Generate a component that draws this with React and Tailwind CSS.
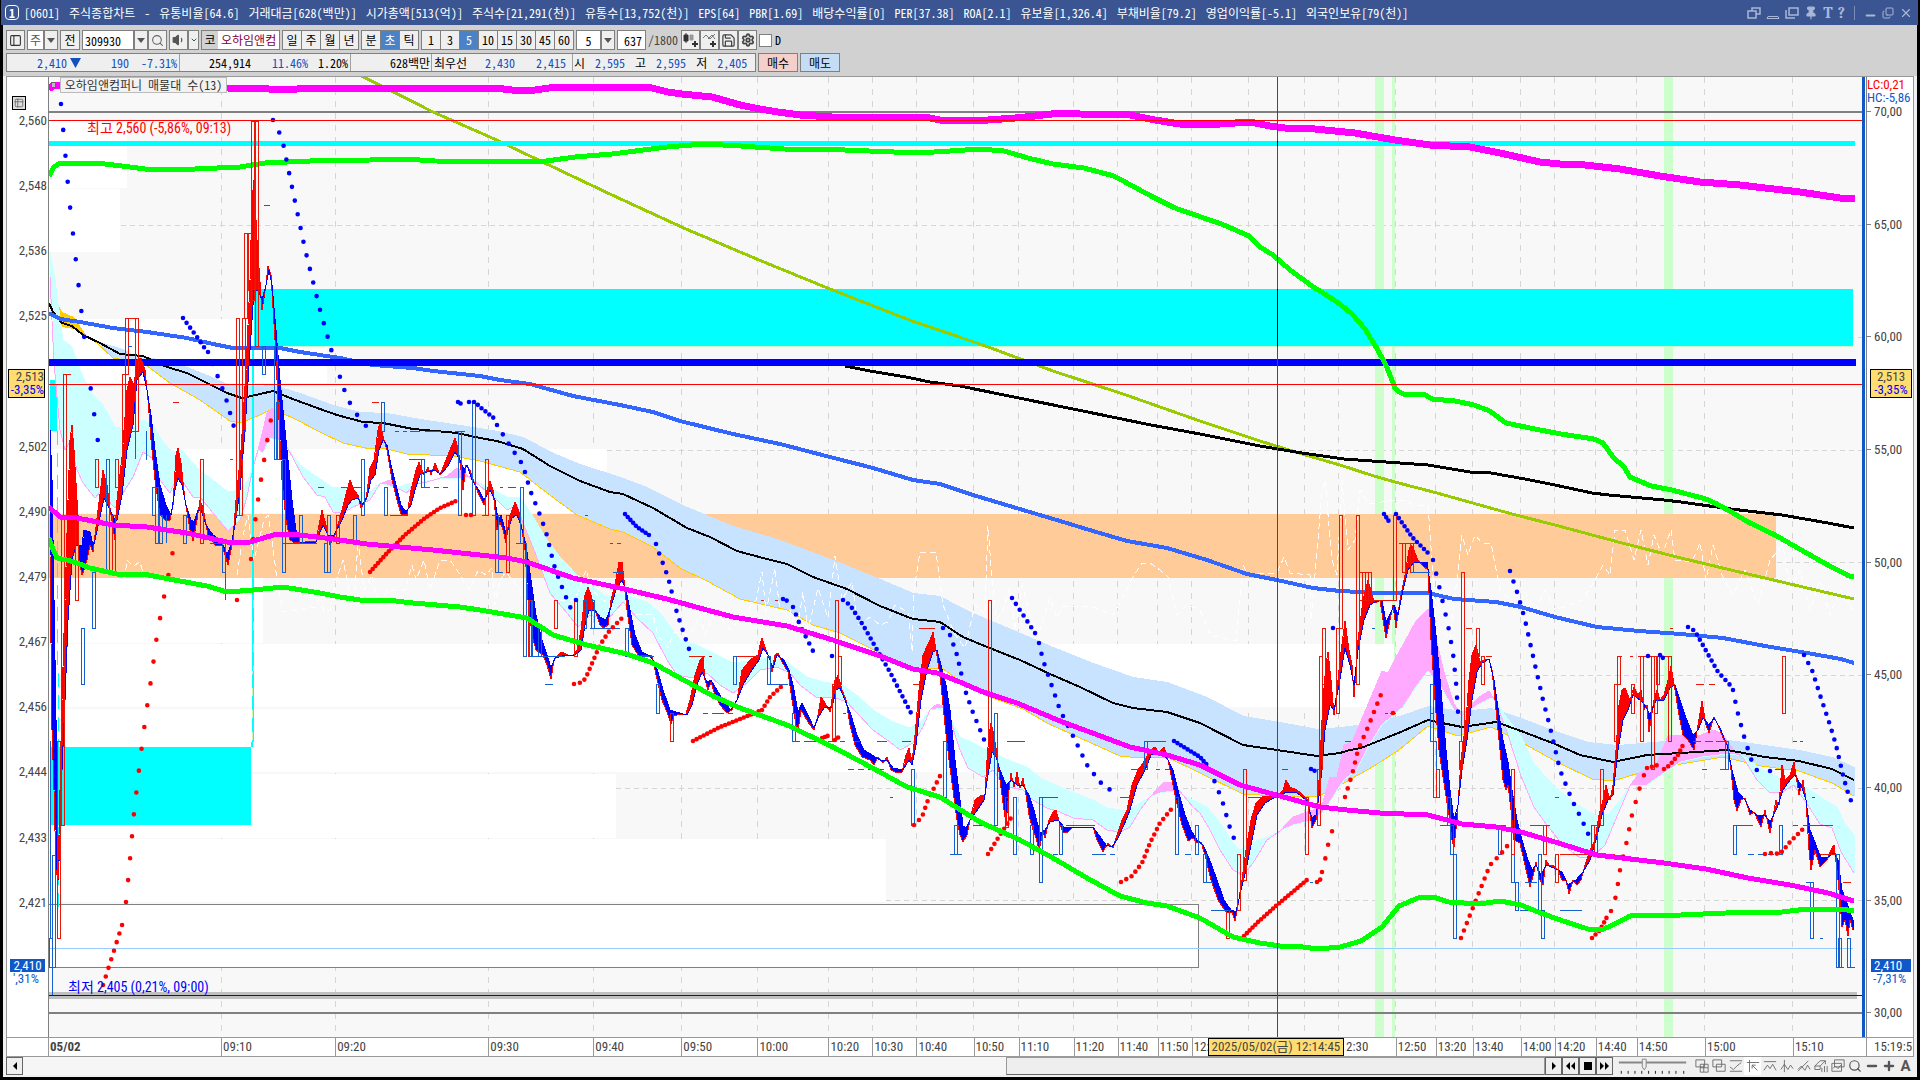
import {
  ChevronDown, Search, Volume1, Save, Settings, Pin, Minus, Plus, X, Copy, PanelLeft, Table2,
} from 'lucide-react'

// plot coordinates: x 49..1862, y 77..1037
const VIEW = '49 77 1813 960'

const line = (s) => s.trim().split(/\s+/).map((p) => p.split(',').map(Number))

const topMagenta = '49,89 54,85 60,86 75,88 227,88 269,89 282,90 312,88 495,88 520,91 535,90 556,87 640,87 648,87 668,92 682,94 712,97 740,105 760,109 778,112 800,115 832,117 870,117 925,117 940,120 975,121 1015,118 1035,116 1060,113 1080,114 1130,115 1155,120 1180,124 1200,125 1220,124 1250,122 1270,126 1285,128 1315,129 1355,133 1395,140 1430,145 1470,147 1500,153 1540,162 1560,164 1585,165 1620,169 1660,176 1700,182 1740,185 1765,188 1800,192 1840,198 1855,198'
const topGreen = '49,176 54,167 60,163 95,163 105,164 130,167 145,169 195,169 240,167 265,163 310,161 370,160 405,159 435,161 539,162 575,157 612,154 667,147 704,144 741,146 784,149 845,150 918,153 950,151 980,149 1004,151 1028,158 1053,164 1084,168 1114,176 1151,196 1175,208 1224,225 1249,236 1260,247 1273,255 1290,270 1312,286 1320,291 1340,304 1352,314 1365,329 1376,347 1386,365 1395,388 1398,391 1405,395 1424,394 1432,399 1455,401 1474,405 1490,411 1506,423 1535,429 1561,434 1594,439 1603,443 1613,457 1624,467 1630,477 1651,486 1672,490 1706,499 1717,504 1733,513 1748,522 1775,535 1803,551 1826,564 1849,576 1854,577'
const olive = '361,76 380,85 433,112 490,137 612,195 686,229 759,260 830,289 912,321 980,344 1053,371 1126,395 1200,421 1260,441 1302,454 1340,465 1374,476 1395,482 1437,493 1512,514 1555,525 1622,543 1681,558 1731,570 1786,583 1854,599'
const blackLong = '845,366 870,371 906,377 930,382 960,386 1004,395 1078,410 1151,425 1200,434 1260,446 1302,453 1344,459 1428,465 1470,472 1491,473 1525,479 1555,485 1592,493 1609,495 1664,500 1681,502 1731,509 1782,515 1828,523 1854,528'
const blueLong = '49,313 60,319 80,322 113,328 147,332 187,338 213,344 233,348 280,348 300,352 340,358 373,365 413,368 433,371 480,376 500,380 530,384 573,396 620,405 653,412 680,421 733,434 780,444 830,457 873,468 913,480 940,484 973,495 1013,507 1060,521 1093,531 1127,541 1167,548 1207,560 1247,574 1277,580 1313,588 1340,591 1380,593 1428,593 1454,599 1496,602 1521,607 1555,617 1597,627 1639,631 1681,634 1723,638 1765,646 1807,653 1841,659 1854,663'
const midMagenta = '49,507 60,517 77,518 113,525 147,527 187,533 227,542 250,542 277,534 300,535 333,539 367,544 433,550 480,555 507,558 527,562 573,578 620,588 667,599 707,610 733,617 787,626 833,640 880,656 913,669 937,673 960,682 983,692 1017,703 1060,721 1087,731 1130,747 1167,755 1200,765 1240,785 1280,796 1320,807 1347,810 1380,813 1428,815 1462,824 1496,827 1521,832 1555,842 1597,855 1664,863 1706,869 1748,878 1790,885 1828,893 1854,901'
const lowGreen = '49,538 52,547 57,558 67,560 77,563 90,568 117,574 143,574 180,581 207,586 227,592 253,590 283,587 320,593 340,597 360,600 387,600 413,603 460,607 480,610 527,618 553,635 587,645 627,654 653,663 680,678 713,696 740,708 787,725 833,747 867,765 907,787 940,797 980,822 1020,840 1053,858 1087,878 1120,896 1147,903 1167,906 1200,918 1233,937 1260,943 1280,946 1303,947 1318,949 1340,947 1361,941 1382,927 1399,906 1418,898 1433,897 1449,902 1479,904 1500,901 1521,905 1538,912 1563,921 1588,929 1601,930 1611,926 1630,916 1681,915 1748,912 1782,912 1807,909 1841,909 1854,911'

const cloudTop = '62,323 83,334 100,342 125,350 133,355 153,358 187,367 207,375 227,384 253,386 273,385 300,393 333,405 360,412 387,413 420,419 480,428 497,431 523,437 553,453 580,464 620,477 647,487 687,507 733,526 780,540 833,560 880,579 913,593 940,596 960,607 973,613 1013,630 1053,647 1093,663 1133,677 1167,682 1207,697 1243,716 1280,722 1317,729 1340,727 1365,724 1399,716 1428,706 1462,711 1491,708 1521,718 1555,731 1588,742 1618,745 1664,741 1714,738 1757,744 1799,750 1832,757 1854,767'
const cloudMid = '49,303 53,312 62,323 72,326 83,335 100,343 120,354 143,356 167,367 187,373 207,383 227,393 242,398 260,394 273,391 290,398 320,409 337,415 363,422 383,423 413,429 457,433 480,438 497,441 523,449 550,466 580,481 610,492 623,494 653,508 687,528 710,537 737,551 763,558 787,564 813,577 847,589 880,606 913,619 940,622 963,637 987,647 1020,660 1050,674 1080,687 1113,703 1133,708 1167,712 1200,723 1243,745 1277,750 1317,756 1340,753 1350,750 1361,748 1386,738 1403,731 1428,720 1437,722 1462,727 1496,722 1521,731 1555,744 1580,755 1613,762 1647,755 1681,753 1727,750 1765,757 1799,761 1832,769 1854,780'
const cloudLow = '62,312 66,317 74,320 83,334 97,343 113,358 143,363 170,383 200,400 230,421 240,423 253,418 273,409 293,418 320,432 343,443 370,449 383,448 407,454 453,456 480,461 520,472 547,493 577,515 610,529 623,532 653,547 680,568 707,581 740,599 787,610 813,625 840,633 880,653 913,669 930,668 943,669 973,690 990,697 1023,709 1047,723 1080,738 1120,756 1140,758 1167,757 1200,773 1243,794 1277,796 1319,796 1344,783 1374,766 1399,750 1428,726 1458,736 1491,727 1521,742 1555,761 1592,779 1613,781 1639,773 1681,764 1723,757 1761,766 1799,771 1832,783 1854,796'

const swiftTop = '50,252 55,280 58,303 63,340 72,347 80,370 90,392 103,405 115,427 130,430 143,420 153,425 163,442 173,452 182,450 197,468 213,480 228,492 240,490 248,480 258,450 263,453 270,438 283,442 287,447 300,465 317,477 333,488 350,487 360,492 370,492 380,483 397,488 407,484 420,482 447,478 457,479 467,477 480,483 490,488 507,497 520,497 530,512 547,540 560,557 577,575 593,587 607,597 620,593 647,602 660,613 680,640 697,645 713,653 733,663 757,660 770,657 787,662 807,677 823,682 843,685 860,698 873,710 893,722 910,728 920,723 930,710 943,708 948,713 960,737 973,743 993,753 1013,762 1027,767 1040,778 1060,787 1080,795 1093,800 1107,808 1127,811 1140,803 1150,797 1160,793 1173,791 1183,795 1193,800 1207,807 1220,823 1233,843 1240,850 1250,843 1267,837 1280,831 1293,825 1313,820 1323,812 1344,780 1357,769 1369,745 1382,725 1403,707 1416,687 1428,671 1441,687 1454,710 1462,716 1479,704 1491,698 1496,700 1504,714 1521,736 1534,764 1555,787 1576,804 1597,816 1609,814 1622,798 1630,786 1647,785 1664,773 1681,762 1702,757 1727,754 1744,756 1757,766 1769,773 1782,780 1794,780 1807,788 1828,802 1837,807 1845,824 1854,835'
const swiftLow = '50,277 54,363 60,430 65,450 70,442 77,470 83,483 95,498 100,492 115,508 123,493 133,477 143,452 152,458 160,480 170,493 177,477 183,482 193,497 200,497 213,513 228,531 240,520 247,497 253,468 258,450 263,430 267,413 272,408 282,417 287,447 293,458 303,477 317,495 325,497 333,512 343,513 353,507 370,500 380,484 390,480 397,488 407,493 413,485 427,482 447,476 457,468 467,475 480,486 497,500 507,510 517,505 523,523 533,547 550,593 567,613 578,627 590,615 607,620 623,602 637,618 653,633 667,660 677,675 693,678 707,673 720,685 733,693 747,683 760,670 777,667 790,673 800,685 817,698 833,697 847,702 857,713 873,730 890,742 900,750 913,743 923,727 930,710 937,704 942,706 948,713 960,750 968,768 983,777 993,770 1000,780 1010,787 1023,790 1033,800 1047,808 1060,812 1073,818 1093,820 1107,830 1120,832 1130,827 1140,810 1150,797 1163,783 1172,782 1183,795 1193,807 1200,813 1210,830 1220,850 1233,870 1243,875 1253,863 1267,840 1280,831 1293,817 1313,810 1323,802 1330,777 1337,777 1344,745 1352,742 1361,721 1382,671 1388,673 1395,659 1403,645 1416,621 1428,609 1435,635 1445,676 1454,704 1462,716 1470,707 1479,697 1489,691 1496,702 1508,735 1521,776 1534,807 1546,824 1563,845 1580,858 1592,857 1605,845 1618,814 1630,786 1639,773 1656,766 1668,736 1685,735 1698,736 1714,730 1723,735 1733,749 1744,759 1757,780 1769,792 1782,792 1794,785 1807,804 1820,824 1832,828 1841,852 1854,873'

const fast = '50,555 52,730 54,790 56,870 58,880 60,790 62,700 65,600 68,500 70,440 72,425 74,450 77,500 79,560 82,575 84,570 87,560 90,545 93,552 98,510 103,470 107,485 111,515 115,540 117,500 122,457 127,390 130,377 134,385 137,360 141,358 145,370 148,400 151,440 155,480 160,515 165,520 170,520 173,505 176,455 178,448 181,463 185,500 190,530 193,541 197,520 200,500 203,508 208,535 215,545 222,545 228,565 233,540 236,500 241,450 246,370 250,280 252,200 254,180 257,240 262,310 266,285 268,266 271,275 275,340 278,400 282,480 286,520 290,540 295,543 305,542 316,541 320,520 322,510 326,525 330,545 335,535 342,510 347,490 350,480 354,490 358,495 361,508 366,500 370,468 374,460 378,430 380,423 384,440 387,450 392,480 397,500 401,514 407,515 411,490 416,470 419,462 424,475 428,467 431,475 435,463 440,475 446,460 452,445 455,438 458,448 461,470 463,490 466,465 470,470 476,488 480,497 484,505 487,490 490,481 493,490 495,510 497,530 500,522 503,530 506,543 509,520 512,510 515,502 519,512 522,530 525,550 528,600 532,635 536,650 543,655 547,665 551,679 554,660 558,655 562,652 570,656 573,655 577,650 581,630 585,595 588,587 591,595 595,610 600,625 604,628 608,625 611,600 615,585 619,562 622,562 624,580 627,610 632,645 638,655 652,656 656,675 662,700 667,712 671,724 674,716 680,714 686,714 690,700 695,675 700,660 703,657 705,680 708,690 711,682 715,695 720,705 727,713 732,710 737,700 742,670 750,660 758,655 760,645 762,638 766,650 770,660 772,672 775,655 778,653 782,662 788,672 792,700 796,725 798,731 801,710 804,715 808,722 814,730 818,715 821,697 825,703 830,712 835,680 838,675 842,690 846,700 850,725 855,745 862,757 870,760 874,765 878,757 883,763 887,757 891,770 895,772 902,772 906,755 909,748 912,762 915,735 919,690 923,655 930,640 933,632 936,650 940,675 945,725 949,760 953,790 957,820 960,835 963,842 967,835 971,815 975,800 980,796 985,795 987,760 989,735 991,723 994,735 997,755 1000,780 1004,810 1006,824 1009,790 1011,773 1014,787 1017,772 1020,788 1023,778 1026,795 1029,815 1033,830 1036,838 1039,850 1043,832 1045,838 1049,820 1053,812 1056,810 1060,825 1063,832 1067,833 1073,827 1093,827 1097,840 1103,852 1108,843 1113,848 1117,835 1122,820 1127,810 1132,785 1138,770 1145,760 1150,750 1155,747 1159,753 1164,747 1167,755 1171,775 1176,800 1182,825 1188,841 1193,838 1197,843 1201,842 1205,855 1211,880 1218,900 1226,912 1232,912 1235,921 1238,905 1242,880 1246,850 1251,820 1256,803 1262,797 1277,796 1283,790 1286,780 1290,787 1297,790 1303,795 1308,800 1312,828 1316,820 1318,800 1320,760 1323,700 1326,665 1328,652 1331,680 1334,715 1337,690 1340,660 1345,621 1349,650 1352,665 1354,697 1358,640 1363,600 1368,580 1372,595 1375,603 1380,600 1383,620 1386,638 1390,620 1393,605 1396,628 1400,600 1405,575 1409,550 1411,545 1413,548 1418,560 1423,566 1428,570 1431,640 1435,700 1439,750 1445,790 1449,815 1452,840 1454,847 1457,820 1461,760 1466,720 1469,680 1472,655 1476,645 1480,662 1484,660 1489,659 1492,670 1495,700 1499,740 1503,780 1506,790 1508,785 1511,810 1514,840 1520,843 1525,865 1530,887 1534,872 1536,862 1540,880 1543,885 1546,860 1549,865 1554,866 1558,870 1562,880 1566,880 1569,894 1573,880 1577,885 1581,880 1585,865 1590,850 1595,840 1599,815 1603,800 1606,785 1610,800 1613,785 1616,750 1619,705 1622,690 1625,688 1630,700 1634,687 1638,695 1641,690 1644,710 1647,705 1649,732 1654,700 1657,690 1660,700 1664,695 1668,680 1671,666 1675,690 1679,715 1683,735 1688,740 1694,750 1698,725 1702,701 1706,725 1709,733 1714,717 1718,725 1724,740 1728,745 1731,770 1734,800 1737,811 1741,800 1745,798 1750,815 1754,812 1761,827 1765,810 1770,833 1776,800 1779,805 1782,765 1785,780 1790,775 1794,762 1799,795 1803,780 1806,800 1809,850 1811,870 1815,850 1820,867 1827,860 1831,850 1834,845 1837,870 1840,900 1842,927 1845,920 1848,936 1850,920 1853,930'
const slow = '50,430 52,480 54,600 56,720 58,860 60,860 62,770 65,700 68,620 72,560 76,545 79,545 82,545 84,530 90,532 93,545 95,540 104,498 110,510 115,520 117,520 122,495 127,450 133,425 137,380 143,372 147,390 151,415 155,450 160,485 166,505 171,515 175,490 178,478 182,485 186,505 191,520 194,522 198,510 201,510 206,525 213,535 221,540 227,555 231,545 235,525 240,490 245,430 250,350 254,290 258,290 262,300 266,285 269,270 272,285 276,330 280,380 284,420 288,460 292,500 296,530 300,542 316,542 321,530 323,525 328,535 334,535 342,520 348,505 352,500 358,498 362,505 367,497 371,480 375,475 379,450 383,440 387,445 391,465 396,485 401,505 406,512 411,505 415,490 420,475 427,472 434,470 441,474 448,466 455,452 460,460 464,470 467,465 472,480 480,492 484,500 490,490 495,500 498,520 501,515 505,530 508,530 512,518 517,515 521,525 526,545 531,580 536,615 542,640 547,655 551,668 555,658 562,656 575,655 581,650 585,625 589,610 595,610 600,617 606,620 610,610 616,590 622,580 626,590 630,610 635,635 642,652 650,656 656,665 663,690 670,710 676,712 687,715 692,705 697,685 702,672 707,682 711,680 717,690 724,702 731,710 737,700 743,685 752,670 759,660 763,648 768,655 773,668 777,655 784,660 789,670 793,685 798,712 802,703 808,715 814,728 818,718 824,708 832,707 836,690 840,688 845,700 851,715 857,735 864,750 872,755 880,760 887,760 893,768 903,770 909,760 912,765 916,745 921,700 927,670 933,652 937,650 941,665 946,685 950,710 955,760 960,800 963,826 966,828 970,820 976,812 984,800 988,775 992,752 996,757 1000,770 1006,785 1011,780 1017,785 1023,785 1029,795 1034,810 1040,833 1045,830 1050,822 1058,820 1064,827 1093,827 1099,835 1106,845 1112,847 1118,838 1124,825 1130,810 1137,785 1145,770 1151,755 1157,752 1162,752 1168,760 1173,770 1178,790 1185,815 1191,830 1197,840 1203,845 1209,858 1217,880 1224,900 1231,910 1236,912 1241,890 1246,870 1251,845 1257,815 1265,803 1277,796 1287,792 1296,792 1306,800 1312,818 1316,815 1320,790 1325,730 1330,705 1334,710 1339,685 1345,648 1350,665 1354,685 1358,650 1364,620 1370,605 1375,602 1382,600 1386,622 1391,612 1394,605 1398,615 1403,590 1408,570 1413,563 1420,562 1427,562 1431,590 1436,635 1441,690 1446,750 1450,790 1454,820 1458,805 1462,770 1467,740 1472,700 1477,672 1482,663 1489,659 1494,680 1499,715 1503,740 1508,762 1512,790 1517,820 1522,840 1528,860 1532,870 1536,865 1541,875 1546,865 1554,868 1562,872 1568,885 1576,880 1583,872 1590,860 1596,840 1602,815 1608,800 1613,795 1618,750 1623,720 1628,710 1633,695 1640,700 1645,705 1650,715 1656,700 1664,700 1670,688 1675,685 1680,700 1686,718 1693,735 1698,730 1703,718 1709,725 1714,718 1720,728 1727,745 1732,770 1738,792 1745,800 1750,810 1757,815 1765,815 1770,822 1777,808 1783,790 1790,780 1795,775 1801,785 1806,800 1810,830 1816,845 1821,858 1828,857 1834,853 1838,860 1842,890 1846,900 1850,912 1853,920'

// every column between two curves, split by which curve is on top
function band(a, b) {
  const at = (pts, x, i) => {
    while (i.n < pts.length - 2 && pts[i.n + 1][0] < x) i.n++
    const [x0, y0] = pts[i.n]
    const [x1, y1] = pts[i.n + 1]
    return y0 + ((y1 - y0) * (x - x0)) / (x1 - x0 || 1)
  }
  const pa = line(a)
  const pb = line(b)
  const ia = { n: 0 }
  const ib = { n: 0 }
  const end = Math.min(pa[pa.length - 1][0], pb[pb.length - 1][0])
  let over = ''
  let under = ''
  for (let x = Math.max(pa[0][0], pb[0][0]); x <= end; x++) {
    const ya = Math.round(at(pa, x, ia))
    const yb = Math.round(at(pb, x, ib))
    if (ya < yb) over += `M${x} ${ya}h1V${yb}h-1z`
    else if (yb < ya) under += `M${x} ${yb}h1V${ya}h-1z`
  }
  return { over, under }
}

const cloud = band(cloudTop, cloudLow)
const swift = band(swiftTop, swiftLow)
const price = band(fast, slow)

// volume profile rows: [top, bottom, right edge]
const profile = [
  [121, 188, 127], [189, 252, 120], [319, 383, 327], [449, 513, 607], [578, 643, 263],
  [644, 707, 1394], [709, 772, 1150], [774, 838, 616], [839, 902, 886],
]

// parabolic dots: [spacing, points]
const sarDown = [
  [26, '61,104 69,197 78,280 86,354 98,442'],
  [6, '183,318 197,337 206,350'], [13, '208,352 214,367 225,395 234,427'],
  [14, '273,120 282,138 293,192 305,249 319,306 333,356 347,398 359,418 367,427'],
  [3, '458,402 463,405'], [5, '469,402 475,402 480,407 495,419'],
  [11, '497,425 512,449 523,465 530,490 540,515 546,532 554,565 563,590 571,609'],
  [4, '625,514 637,527 652,537'], [10, '656,544 659,553 668,577 677,613 690,652'],
  [4, '783,599 790,602'], [8, '793,607 800,625 815,655'], [6, '843,600 850,605 863,625 880,655 890,672 911,713'],
  [10, '943,628 950,635 957,655 965,690 972,710 985,742'],
  [7, '1012,598 1037,636'], [11, '1039,643 1043,660 1060,710 1075,740 1087,765 1100,782 1118,796'],
  [4, '1174,741 1200,757 1207,765'], [12, '1210,770 1222,800 1232,835 1240,848'],
  [4, '1311,769 1315,771'], [4, '1333,628 1334,628'], [4, '576,600 577,600'], [4, '832,656 833,656'],
  [4, '1384,514 1390,523'], [5, '1396,514 1412,537 1430,555'],
  [14, '1433,560 1440,590 1448,625 1453,653 1456,682 1458,712'],
  [11, '1510,571 1518,595 1525,620 1535,665 1543,700 1550,727 1560,770 1572,800 1582,820 1590,838'],
  [3, '1648,656 1649,656'], [4, '1660,655 1663,658'], [6, '1688,627 1695,631 1700,640 1718,672 1731,686'],
  [12, '1733,690 1737,710 1745,740 1753,765 1762,777'], [3, '1770,771 1771,771'],
  [9, '1804,655 1812,670 1820,695 1830,725 1836,745 1843,775 1847,790 1853,806'],
]
const sarUp = [
  [9, '103,985 112,957 123,922'], [22, '126,902 129,871 134,813 140,761 146,714 152,673 157,635 163,602 169,572 174,545 180,521'],
  [10, '237,600 245,585'], [20, '251,559 256,514 262,473 268,436 271,419'],
  [4, '370,572 388,552 405,535 425,518 440,508 456,501'], [5, '466,515 472,515'],
  [6, '574,684 583,682 587,675 600,645 610,630 622,618'],
  [4, '693,741 720,727 745,717 762,710'], [5, '762,710 770,697 782,686'],
  [3, '822,738 830,735'], [4, '835,740 840,736'], [7, '914,825 922,817 928,800 940,776'],
  [6, '988,854 1000,835 1011,818'], [6, '1121,882 1132,876 1142,863 1150,843 1160,823 1173,807'],
  [4, '1244,936 1258,922 1277,905 1295,890 1308,879'], [4, '1317,882 1321,879'],
  [14, '1322,872 1324,865 1328,845 1333,828 1338,822'], [9, '1345,797 1352,775 1358,750 1368,727 1382,692'],
  [3, '1393,713 1394,713'], [8, '1461,938 1470,915 1480,890 1490,865 1500,855 1508,845'],
  [5, '1592,938 1600,930 1608,915'], [14, '1611,911 1614,905 1617,890 1620,870 1626,845 1632,815 1640,787 1644,775'],
  [5, '1647,768 1658,765'], [5, '1664,769 1670,765 1678,755 1684,743'],
  [6, '1765,854 1772,853 1780,854 1790,842 1803,829'],
]

// candle bodies: [x, top, bottom]
const rising = [
  [57, 741, 938], [61, 515, 825], [63, 374, 515], [75, 515, 600], [95, 459, 487], [112, 515, 572], [115, 459, 487],
  [122, 374, 459], [125, 318, 374], [135, 318, 431], [200, 459, 543], [236, 318, 515], [239, 459, 515], [242, 318, 431],
  [244, 233, 318], [248, 233, 290], [251, 121, 300], [255, 121, 346], [336, 515, 543], [485, 459, 515], [506, 515, 572],
  [528, 600, 656], [554, 600, 628], [574, 600, 656], [670, 713, 741], [832, 684, 741], [835, 600, 684], [838, 656, 684],
  [988, 600, 741], [1005, 797, 827], [1226, 910, 938], [1237, 854, 910], [1243, 769, 880], [1305, 797, 854],
  [1317, 769, 825], [1319, 656, 769], [1322, 628, 684], [1336, 628, 713], [1339, 515, 628], [1356, 515, 684],
  [1359, 572, 600], [1362, 572, 600], [1365, 572, 600], [1368, 572, 600], [1393, 515, 600], [1402, 543, 572],
  [1410, 543, 572], [1436, 769, 797], [1459, 741, 769], [1461, 572, 741], [1476, 628, 656], [1481, 656, 684],
  [1511, 769, 854], [1543, 825, 854], [1555, 854, 882], [1591, 825, 854], [1594, 825, 854], [1600, 769, 825],
  [1614, 684, 741], [1617, 656, 684], [1631, 684, 713], [1640, 656, 741], [1651, 656, 769], [1654, 656, 713],
  [1656, 656, 684], [1668, 656, 741], [1782, 656, 713],
]
const falling = [
  [49, 938, 967], [52, 855, 967], [81, 628, 684], [92, 572, 628], [106, 459, 572], [152, 487, 515], [155, 487, 543], [159, 515, 543],
  [183, 515, 543], [222, 543, 572], [262, 346, 374], [274, 346, 459], [276, 402, 459], [282, 459, 572], [299, 515, 543],
  [324, 543, 572], [327, 515, 572], [353, 515, 543], [361, 459, 515], [381, 402, 431], [384, 487, 515], [421, 459, 487],
  [458, 431, 515], [472, 402, 515], [495, 515, 572], [520, 487, 543], [523, 543, 656], [529, 600, 656], [538, 628, 656],
  [583, 600, 628], [591, 600, 628], [625, 628, 656], [656, 684, 713], [733, 656, 684], [767, 656, 684], [792, 713, 741],
  [911, 769, 825], [943, 741, 797], [954, 825, 854], [994, 713, 825], [1013, 797, 854], [1030, 825, 854], [1039, 797, 882],
  [1059, 825, 854], [1144, 741, 769], [1175, 797, 854], [1195, 825, 854], [1203, 854, 882], [1430, 684, 741],
  [1433, 741, 797], [1447, 797, 825], [1450, 825, 854], [1453, 854, 938], [1498, 825, 854], [1511, 797, 882],
  [1515, 882, 910], [1538, 854, 910], [1541, 910, 938], [1725, 741, 769], [1733, 825, 854], [1779, 825, 854],
  [1810, 882, 938], [1836, 854, 967], [1838, 938, 967], [1847, 938, 967],
]
const flatUp = 'M264 205h6M173 402h6M66 374h5M128 318h10M230 459h3M318 487h6M341 487h20M372 402h7M395 431h4M403 431h4M410 431h10M425 431h16M455 431h10M409 459h14M500 487h3M508 487h8M585 515h3M610 543h3M617 543h4M689 656h16M709 656h3M737 656h22M761 600h3M775 600h3M919 628h16M913 684h10M902 741h9M828 741h6M843 713h3M855 741h5M877 741h10M1007 741h18M1040 797h18M1066 825h29M1131 769h14M1148 741h18M1120 797h14M1248 797h40M1282 769h6M1371 600h24M1361 572h8M1399 543h16M1466 628h6M1486 656h6M1617 656h5M1630 656h3M1638 656h20M1662 656h6M1670 628h3M1672 684h3M1696 684h8M1709 684h6M1702 769h5M1775 769h9M1793 741h4M1800 741h3M1793 825h5M1803 825h30M1812 797h3M1820 854h16M1843 882h8M1536 825h14M1560 854h55'
const flatDown = 'M128 346h4M131 431h6M212 543h11M282 543h35M210 543h5M425 487h5M434 487h5M443 487h5M390 515h18M482 515h3M492 515h8M516 543h8M495 572h8M613 572h11M530 656h35M545 684h8M590 628h30M628 656h26M703 713h5M712 713h12M728 713h5M768 684h20M795 741h5M804 741h12M820 741h5M840 741h5M848 769h6M858 769h6M868 769h6M878 769h6M890 797h3M950 854h12M1092 854h14M1110 854h5M1053 854h5M973 825h12M1156 769h4M1165 769h5M1185 854h6M1205 882h8M1211 910h20M1310 882h3M1372 628h3M1347 741h3M1412 572h18M1385 713h3M1390 713h6M1345 741h6M1440 825h8M1430 713h3M1500 825h6M1520 910h20M1525 882h12M1560 910h22M1530 825h8M1555 797h4M1693 741h8M1705 741h8M1716 741h10M1733 825h20M1748 854h6M1758 854h6M1768 854h6M1720 769h8M1806 882h5M1820 938h3M1838 967h6M1850 967h5'

// dashed white oscillator
const osc = [
  '122,600 127,560 133,566 140,562 148,590 170,600',
  '237,575 243,535 248,515 254,560 259,540 264,520 268,515 272,540 277,580 283,612 317,607 320,590 324,612 330,610 335,585 343,560 349,590 355,590 358,540 364,590 372,575 378,605 388,590 405,590 412,565 416,580 424,560 430,590 440,560 450,560 457,570 463,580 470,590 478,570 486,575 492,568 495,605 500,580 506,572 512,580 520,590 528,625',
  '560,600 575,600 586,570 592,590 610,606 627,614 653,614 658,636 668,648 674,632 690,635 700,615 705,635 715,610 730,630 744,615 756,600 762,572 766,612 775,568 780,612 790,610 796,638 803,592 808,630 818,588 828,618 835,556 842,600 852,582 858,625 870,617 880,625 888,622 895,605 908,612 912,652 914,590 920,552 927,552 936,552 943,605 955,635 965,648 975,605 985,615 988,526 992,580 996,620 1003,610 1010,588 1015,630 1022,585 1032,622 1040,630 1050,598 1057,618 1063,606 1093,607 1113,615 1123,597 1133,577 1142,563 1150,563 1160,570 1168,577 1177,615 1187,605 1200,610 1210,635 1236,641 1243,565 1247,573 1277,573 1284,557 1290,573 1310,575 1311,620 1318,540 1322,490 1325,480 1332,560 1337,575 1342,480 1348,550 1355,540 1360,490 1368,503 1375,503 1395,500 1404,500 1416,506 1428,505 1436,620 1450,640 1462,535 1468,555 1475,535 1482,543 1491,543 1500,590 1510,600 1515,615 1525,592 1535,610 1545,590 1555,610 1570,605 1583,600 1595,580 1603,565 1610,575 1615,530 1625,530 1634,560 1641,530 1648,565 1654,535 1662,555 1671,530 1675,560 1692,562 1700,543 1706,580 1713,545 1722,575 1733,595 1745,570 1758,605 1770,560 1783,545 1790,590 1800,570 1810,610 1820,580 1830,615 1840,590 1853,610',
]

const gridX = [221, 335, 488, 593, 681, 757, 828, 872, 916, 973, 1018, 1073, 1117, 1157, 1191, 1248, 1304, 1338, 1395, 1435, 1472, 1520, 1554, 1595, 1636, 1704, 1792]
const gridY = [225, 337, 450, 562, 675, 788, 900]

const box = ([x, y1, y2]) => `M${x} ${y1}h3V${y2}h-3z`

function Dots({ runs, color }) {
  return runs.map(([gap, pts]) => (
    <polyline key={pts} points={pts} fill="none" stroke={color} strokeWidth="4.6" strokeLinecap="round" strokeDasharray={`0 ${gap}`} />
  ))
}

function Chart() {
  return (
    <svg viewBox={VIEW} preserveAspectRatio="none" className="block h-full w-full" role="img" aria-label="오하임앤컴퍼니 5초 차트">
      <g shapeRendering="crispEdges">
        <path d={gridX.map((x) => `M${x} 77V1037`).join('')} stroke="#d6d6d6" strokeDasharray="6 6" transform="translate(0.5 0)" />
        <path d={gridY.map((y) => `M49 ${y}H1862`).join('')} stroke="#d6d6d6" strokeDasharray="5 4" transform="translate(0 0.5)" />
        <path d="M1375 77h9v960h-9zM1392 77h3v960h-3zM1664 77h9v960h-9z" fill="#ccffcc" />
        <path d={profile.map(([t, b, r]) => `M49 ${t}H${r}V${b}H49z`).join('')} fill="#fff" />
        <path d="M49 514H1776V578H49z" fill="#ffcc99" />
        <rect x="48" y="904" width="1150" height="63" fill="#fff" stroke="#808080" />
        <path d="M49 992H1857V999H49z" fill="#c0c0c0" />
        <path d="M49 112H1862M49 1013H1862" stroke="#808080" strokeWidth="2" />
        <path d="M49 948.5H1853" stroke="#99ccff" />
        <path d="M254 289H1853V346H254zM50 747H251V825H50zM50 380H57V431H50z" fill="#00ffff" />
        <path d="M254 346.5H1853" stroke="#ccffcc" />
        <path d={cloud.over + cloud.under} fill="#c8e3ff" />
        <path d="M50 278L56 300 62 312 74 317 88 338 74 329 62 327 55 318z" fill="#ffcc00" />
        <polyline points={cloudLow} fill="none" stroke="#ffcc00" />
        <path d={swift.over} fill="#ccffff" />
        <path d={swift.under} fill="#ffaaff" />
        <polyline points={swiftTop} fill="none" stroke="#ccffff" />
        <polyline points={swiftLow} fill="none" stroke="#ffaaff" />
        <path d="M254 289H1853V346H254z" fill="#00ffff" />
        <path d="M253.5 346L252.5 747" stroke="#00ffff" strokeWidth="2" />
        <path d="M253.5 600L252.5 747M57.5 431L58.5 910" stroke="#c8f5c0" strokeDasharray="8 14" />
        <path d="M57.5 431L58.5 910" stroke="#00ffff" strokeDasharray="14 8" />
        {osc.map((o) => <polyline key={o} points={o} fill="none" stroke="#fff" strokeDasharray="6 4" />)}
        <polyline points={cloudMid} fill="none" stroke="#000" strokeWidth="2" />
      </g>
      <g shapeRendering="crispEdges" fill="none" strokeLinejoin="round">
        <polyline points={olive} stroke="#99cc00" strokeWidth="3" />
        <polyline points={blackLong} stroke="#000" strokeWidth="3" />
        <polyline points={blueLong} stroke="#3366ff" strokeWidth="4" />
        <path d="M49 362.5H1856" stroke="#0000ff" strokeWidth="7" />
        <path d="M49 143.5H1855" stroke="#00ffff" strokeWidth="5" />
        <polyline points={topGreen} stroke="#00ff00" strokeWidth="5" />
      </g>
      <g shapeRendering="crispEdges">
        <path d={price.under} fill="#0000ff" />
        <path d={price.over} fill="#ff0000" />
        <polyline points={fast} fill="none" stroke="#ff0000" />
        <polyline points={slow} fill="none" stroke="#0000ff" />
        <path d={falling.map(box).join('')} fill="none" stroke="#1560d0" />
        <path d={rising.map(box).join('')} fill="none" stroke="#e81708" />
        <path d={flatUp} stroke="#e81708" />
        <path d={flatDown} stroke="#1560d0" />
        <path d="M146 431V460M225 572V600M135 431V459M50.5 741V938M52.5 967V995M166 515V543" stroke="#1560d0" />
      </g>
      <Dots runs={sarDown} color="#0000ff" />
      <Dots runs={sarUp} color="#ff0000" />
      <g shapeRendering="crispEdges" fill="none" strokeLinejoin="round">
        <polyline points={midMagenta} stroke="#ff00ff" strokeWidth="5" />
        <polyline points={lowGreen} stroke="#00ff00" strokeWidth="5" />
        <polyline points={topMagenta} stroke="#ff00ff" strokeWidth="7" />
        <path d="M49 120.5H1862M49 384.5H1862" stroke="#ff0000" />
        <path d="M49 995.5H1862" stroke="#0000ff" />
        <path d="M1277.5 77V1037" stroke="#ff0000" />
        <path d="M1277.5 141V146M1277.5 289V346" stroke="#000" />
      </g>
    </svg>
  )
}

const title = [
  '[0601]', '주식종합차트', '-', '유통비율[64.6]', '거래대금[628(백만)]', '시가총액[513(억)]', '주식수[21,291(천)]', '유통수[13,752(천)]',
  'EPS[64]', 'PBR[1.69]', '배당수익률[0]', 'PER[37.38]', 'ROA[2.1]', '유보율[1,326.4]', '부채비율[79.2]', '영업이익률[-5.1]', '외국인보유[79(천)]',
]

// 2,513 and 2,410 are covered by their own tags
const prices = ['2,560', '2,548', '2,536', '2,525', '', '2,502', '2,490', '2,479', '2,467', '2,456', '2,444', '2,433', '2,421', '']
const ratios = ['70,00', '65,00', '60,00', '55,00', '50,00', '45,00', '40,00', '35,00', '30,00']

// [label, width share]
const times = [
  ['05/02', 173], ['09:10', 114], ['09:20', 153], ['09:30', 105], ['09:40', 88], ['09:50', 76], ['10:00', 71], ['10:20', 44],
  ['10:30', 44], ['10:40', 57], ['10:50', 45], ['11:10', 55], ['11:20', 44], ['11:40', 40], ['11:50', 34], ['12:', 147],
  ['', 57], ['12:50', 40], ['13:20', 37], ['13:40', 48], ['14:00', 34], ['14:20', 41], ['14:40', 41], ['14:50', 68],
  ['15:00', 88], ['15:10', 73],
]
const timeColumns = times.map(([, w]) => `minmax(0, ${w}fr)`).join(' ')

function CursorTag() {
  return (
    <>
      <span className="block text-[#444]">2,513</span>
      <span className="block text-[#0000ff]">-3,35%</span>
    </>
  )
}

function Arrow() {
  return (
    <svg viewBox="0 0 8 5" className="h-[5px] w-2" aria-hidden="true">
      <path d="M0 0h8L4 5z" fill="#555" />
    </svg>
  )
}

function Drop({ label }) {
  return (
    <button aria-label={label} className="flex h-5 w-[14px] items-center justify-center border border-[#808080] bg-[#efefef]">
      <Arrow />
    </button>
  )
}

function Tool({ label, children }) {
  return (
    <button aria-label={label} className="flex h-5 w-[19px] items-center justify-center border border-[#808080] bg-[#efefef]">
      {children}
    </button>
  )
}

function Periods({ items, active }) {
  return (
    <div className="flex border-l border-[#808080]">
      {items.map((t) => (
        <button key={t} aria-pressed={t === active} className={`h-5 w-[19px] border-y border-r border-[#808080] text-center ${t === active ? 'bg-[#4a82c8] text-white' : 'bg-[#efefef]'}`}>
          {t}
        </button>
      ))}
    </div>
  )
}

function TitleBar() {
  return (
    <header className="flex h-[25px] items-center bg-[#3a5591] pl-1 text-white">
      <span className="flex h-[15px] w-[14px] items-center justify-center rounded-sm border border-white font-bold">1</span>
      <h1 className="ml-[5px] flex flex-1 gap-[9px] whitespace-nowrap">
        {title.map((t) => <span key={t}>{t}</span>)}
      </h1>
      <div className="flex items-center gap-[5px] pr-[5px] text-[#a9b7d8]">
        <button aria-label="분리" className="w-[14px]">
          <svg viewBox="0 0 14 12" className="h-3 w-[14px]" fill="none" stroke="currentColor" strokeWidth="1.5"><path d="M5 4V1h8v6H9M1 4h8v7H1z" /></svg>
        </button>
        <button aria-label="내리기" className="w-[14px]">
          <svg viewBox="0 0 14 12" className="h-3 w-[14px]" fill="none" stroke="currentColor"><path d="M2 9.5h10l1 2H1z" /></svg>
        </button>
        <button aria-label="복사" className="w-[14px]">
          <svg viewBox="0 0 14 12" className="h-3 w-[14px]" fill="none" stroke="currentColor" strokeWidth="1.5"><path d="M4 1h9v7H4zM1 3v8h9" /></svg>
        </button>
        <button aria-label="고정"><Pin size={14} fill="currentColor" /></button>
        <button aria-label="글꼴" className="font-serif text-base font-bold leading-none">T</button>
        <button aria-label="도움말" className="font-serif text-base font-bold leading-none">?</button>
        <span className="mx-1 h-[14px] w-px bg-[#7a8cb8]" />
        <button aria-label="최소화" className="pt-[6px]"><Minus size={13} strokeWidth={4} /></button>
        <button aria-label="이전 크기로"><Copy size={12} className="-scale-y-100" /></button>
        <button aria-label="닫기"><X size={14} /></button>
      </div>
    </header>
  )
}

function ToolBar() {
  return (
    <div className="flex h-5 items-center gap-[2px] whitespace-nowrap">
      <Tool label="패널">
        <PanelLeft size={13} color="#333" />
      </Tool>
      <div className="flex">
        <button className="h-5 w-[17px] border border-[#808080] bg-white text-[#555]">주</button>
        <Drop label="종목 구분" />
      </div>
      <button className="h-5 w-5 border border-[#808080] bg-[#efefef]">전</button>
      <div className="flex">
        <input aria-label="종목코드" defaultValue="309930" className="h-5 w-[52px] border border-[#808080] bg-white px-[2px]" />
        <Drop label="최근 종목" />
        <Tool label="종목 검색"><Search size={13} color="#666" /></Tool>
      </div>
      <div className="flex">
        <Tool label="소리"><Volume1 size={14} color="#555" fill="#555" /></Tool>
        <button aria-label="소리 설정" className="flex h-5 w-[11px] items-center justify-center border border-[#808080] bg-[#efefef]"><ChevronDown size={8} /></button>
      </div>
      <div className="flex h-5 w-[79px] items-center border border-[#808080] bg-white">
        <span className="flex h-full w-4 items-center justify-center bg-[#d1d1d1]">코</span>
        <span className="ml-[3px] text-[#800040]">오하임앤컴</span>
      </div>
      <Periods items={['일', '주', '월', '년']} />
      <Periods items={['분', '초', '틱']} active="초" />
      <Periods items={['1', '3', '5', '10', '15', '30', '45', '60']} active="5" />
      <div className="flex">
        <input aria-label="주기" defaultValue="5" className="h-5 w-[25px] border border-[#808080] bg-white text-center" />
        <Drop label="주기 목록" />
      </div>
      <input aria-label="봉 개수" defaultValue="637" className="h-5 w-[29px] border border-[#808080] bg-white pl-[6px]" />
      <span className="w-[31px] text-[#444]">/1800</span>
      <div className="flex">
        <Tool label="지표 추가">
          <svg viewBox="0 0 16 16" className="h-4 w-4" aria-hidden="true"><path d="M1 3h4v6H1zM3 1v10" fill="#333" stroke="#333" /><path d="M7 3h3v5H7z" fill="#999" stroke="#999" /><path d="M12 9v6M9 12h6" stroke="#333" strokeWidth="2" /></svg>
        </Tool>
        <Tool label="라인 추가">
          <svg viewBox="0 0 16 16" className="h-4 w-4" fill="none" stroke="#777" aria-hidden="true"><path d="M1 6l3-3 4 4 5-5M6 7l4-4 3 4" /><path d="M11 9v6M8 12h6" stroke="#333" strokeWidth="2" /></svg>
        </Tool>
        <Tool label="저장"><Save size={15} color="#444" /></Tool>
        <Tool label="설정"><Settings size={14} color="#444" strokeWidth={3} /></Tool>
      </div>
      <label className="flex items-center gap-[3px]">
        <input type="checkbox" className="h-[13px] w-[13px] appearance-none border border-[#808080] bg-white" />
        D
      </label>
    </div>
  )
}

function QuoteBar() {
  return (
    <div className="flex h-[19px] items-stretch gap-[2px] whitespace-nowrap">
      <div className="flex w-[750px] items-center border border-[#808080] bg-[#efefef] text-[#1050c0]">
        <div className="flex h-full w-[173px] items-center justify-end border-r border-[#a0a0a0]">
          <span>2,410</span>
          <svg viewBox="0 0 11 10" className="ml-[3px] h-[10px] w-[11px]" aria-hidden="true"><path d="M0 0h11L5.500 10z" fill="#1050c0" /></svg>
          <span className="w-12 text-right">190</span>
          <span className="mr-[2px] w-12 text-right">-7.31%</span>
        </div>
        <div className="flex h-full w-[171px] items-center justify-end border-r border-[#a0a0a0]">
          <span className="text-black">254,914</span>
          <span className="w-[57px] text-right">11.46%</span>
          <span className="mr-[2px] w-10 text-right text-black">1.20%</span>
        </div>
        <div className="flex h-full w-[81px] items-center justify-end border-r border-[#a0a0a0] pr-px text-black">628백만</div>
        <div className="flex h-full w-[141px] items-center border-r border-[#a0a0a0] pl-[2px]">
          <span className="text-black">최우선</span>
          <span className="w-12 text-right">2,430</span>
          <span className="w-[51px] text-right">2,415</span>
        </div>
        <div className="flex h-full items-center gap-[10px] pl-px">
          <span className="text-black">시</span><span>2,595</span>
          <span className="text-black">고</span><span>2,595</span>
          <span className="text-black">저</span><span>2,405</span>
        </div>
      </div>
      <button className="w-10 border border-[#808080] bg-[#f5cfca]">매수</button>
      <button className="w-10 border border-[#808080] bg-[#c5ddf4]">매도</button>
    </div>
  )
}

function BottomBar() {
  const btn = 'flex h-[18px] w-[17px] items-center justify-center border border-[#666] bg-[#efefef]'
  const icons = [
    ['새 창', 'M1 1h10v8H1zM6 6h9v9H6zM10 6v9M6 10h9'],
    ['겹치기', 'M1 1h10v8H1zM5 6h10v8H5z'],
    ['추세', 'M1 2h14M1 14h14M1 9l4 3 4-4 5-4'],
    ['십자선', 'M1 4h14M4 1v14M7 7l6 6M7 7v4M7 7h4'],
    ['수평', 'M1 3h14M1 13l4-6 3 4 3-5 4 7'],
    ['수직', 'M5 1v14M1 12l4-6 4 6 3-5 3 4'],
    ['사선', 'M1 14L13 2M1 12l4-4 4 5 3-6 3 5'],
    ['지우개', 'M1 8l6-6h6l-6 6zM1 8v4h6V8M13 2v4M9 10v5M12 8v7M15 8v7'],
    ['저장', 'M4 1h11v8H4zM1 5h11v9H1zM2 11l3-3 3 3 3-4'],
  ]
  return (
    <footer className="flex h-[20px] items-start bg-[#f0f0f0]">
      <button aria-label="왼쪽" className={btn}><svg viewBox="0 0 4 8" className="h-2 w-1"><path d="M4 0v8L0 4z" /></svg></button>
      <div className="flex h-[18px] min-w-0 flex-1 bg-[#f6f6f6]">
        <div className="ml-[64.6%] flex-1 border border-[#999] border-b-[#666] bg-[#eee]" />
      </div>
      <button aria-label="재생" className={btn}><svg viewBox="0 0 4 8" className="h-2 w-1"><path d="M0 0v8L4 4z" /></svg></button>
      <button aria-label="뒤로" className={btn}><svg viewBox="0 0 9 8" className="h-2 w-[9px]"><path d="M4 0v8L0 4zM9 0v8L5 4z" /></svg></button>
      <button aria-label="정지" className={btn}><svg viewBox="0 0 8 8" className="h-2 w-2"><path d="M0 0h8v8H0z" /></svg></button>
      <button aria-label="앞으로" className={btn}><svg viewBox="0 0 9 8" className="h-2 w-[9px]"><path d="M0 0v8L4 4zM5 0v8L9 4z" /></svg></button>
      <svg viewBox="0 0 82 18" className="h-[18px] w-[80px]" aria-hidden="true">
        <path d="M6 5.500h69" stroke="#888" strokeWidth="2" />
        <path d="M8.500 14v3m7-3v3m7-3v3m7-3v3m7-3v3m7-3v3m7-3v3m7-3v3m7-3v3m8-3v3" stroke="#222" />
        <path d="M30 2h4v8l-2 3-2-3z" fill="#eee" stroke="#888" />
      </svg>
      {icons.map(([name, d]) => (
        <button key={name} aria-label={name} className={`flex h-[18px] w-[17px] items-center justify-center ${name === '십자선' ? 'bg-white' : ''}`}>
          <svg viewBox="0 0 16 16" className="h-[14px] w-[14px]" fill="none" stroke="#666"><path d={d} /></svg>
        </button>
      ))}
      <button aria-label="확대경" className="flex h-[18px] w-[17px] items-center justify-center"><Search size={14} color="#555" /></button>
      <button aria-label="축소" className="flex h-[18px] w-[17px] items-center justify-center"><Minus size={14} strokeWidth={4} color="#555" /></button>
      <button aria-label="확대" className="flex h-[18px] w-[17px] items-center justify-center"><Plus size={14} strokeWidth={4} color="#555" /></button>
      <button aria-label="자동" className="h-[18px] w-[17px] text-center font-[Roboto] text-[15px] font-bold text-[#555]">A</button>
    </footer>
  )
}

export default function App() {
  return (
    <div className="flex h-screen flex-col bg-black pb-[3px] pl-px pr-[2px] font-['Noto_Sans_Mono_CJK_KR','Noto_Sans_CJK_KR',monospace] text-xs leading-none text-black">
      <TitleBar />
      <main className="ml-[2px] mr-px flex min-h-0 flex-1 flex-col bg-[#d1d1d1] pt-[5px]">
        <div className="flex flex-col gap-[3px] px-[3px]">
          <ToolBar />
          <QuoteBar />
        </div>
        <section className="mt-1 flex min-h-0 flex-1 flex-col bg-[#f0f0f0] px-[3px] font-['Roboto_Condensed','Noto_Sans_CJK_KR',sans-serif] text-[13px]">
          <div className="flex min-h-0 flex-1 border border-[#999] bg-white">
            <div className="relative w-[42px] shrink-0 border-r border-[#808080] text-[#444]">
              <div className="ml-[5px] mt-[19px] flex h-[14px] w-[14px] items-center justify-center border border-black bg-[#ddd]"><Table2 size={10} color="#666" /></div>
              <ul className="absolute inset-x-0 bottom-[37px] top-[11px] flex flex-col text-right">
                {prices.map((p, i) => <li key={i} className="flex min-h-0 flex-1 items-center justify-end pr-px">{p}</li>)}
              </ul>
              <div className="absolute left-px top-[32%] -mt-[15px] h-[29px] w-[37px] border border-black bg-[#ffdd70] text-right">
                <CursorTag />
              </div>
              <div className="absolute bottom-[65px] left-[3px] h-[13px] w-[35px] bg-[#1058c8] text-center text-white">2,410</div>
              <div className="absolute bottom-[52px] left-[6px] text-[#1058c8]">',31%</div>
            </div>
            <div className="relative min-w-0 flex-1 bg-[#f8f8f8]">
              <Chart />
              <p className="absolute left-0 top-0 flex h-4 items-center font-['Noto_Sans_Mono_CJK_KR','Noto_Sans_CJK_KR',monospace] text-xs">
                <span className="ml-[2px] mr-1 h-[6px] w-[5px] border border-[#666] bg-[#bbb]" />
                <span className="flex h-4 w-[167px] items-center justify-center whitespace-nowrap border border-[#bbb] bg-[#f2f2f2] text-[#333]">오하임앤컴퍼니 매물대 수(13)</span>
              </p>
              <p className="absolute left-[38px] top-11 whitespace-nowrap text-sm leading-none text-[#ff0000]">최고 2,560 (-5,86%, 09:13)</p>
              <p className="absolute bottom-[43px] left-[19px] whitespace-nowrap text-sm leading-none text-[#0000ff]">최저 2,405 (0,21%, 09:00)</p>
            </div>
            <div className="w-[3px] shrink-0 bg-[#1058c8]" />
            <div className="relative ml-px w-[47px] shrink-0 overflow-hidden border-l border-[#808080] text-[#444]">
              <p className="pt-px text-[#ff0000]">LC:0,21</p>
              <p className="whitespace-nowrap text-[#1058c8]">HC:-5,86</p>
              <ul className="absolute inset-x-0 -bottom-[32px] -top-[22px] flex flex-col">
                {ratios.map((r) => (
                  <li key={r} className="flex min-h-0 flex-1 items-center gap-[3px]">
                    <span className="h-px w-1 bg-[#808080]" />{r}
                  </li>
                ))}
              </ul>
              <div className="absolute left-[3px] top-[32%] -mt-[15px] h-[29px] w-[42px] border border-black bg-[#ffdd70] text-center">
                <CursorTag />
              </div>
              <div className="absolute bottom-[65px] left-1 h-[13px] w-10 bg-[#1058c8] pl-[3px] text-white">2,410</div>
              <div className="absolute bottom-[52px] left-[6px] text-[#1058c8]">-7,31%</div>
            </div>
          </div>
          <div className="flex h-[19px] items-stretch border-x border-b border-[#999] bg-white text-[#444]">
            <div className="w-[41px] shrink-0" />
            <div className="relative grid min-w-0 flex-1" style={{ gridTemplateColumns: timeColumns }}>
              {times.map(([t], i) => (
                <div key={i} className={`flex items-center border-l border-[#999] pb-[2px] pl-px ${i ? '' : 'font-bold'}`}>{t}</div>
              ))}
              <time className="absolute inset-y-0 left-[63.8%] flex w-[136px] items-center justify-center border border-black bg-[#ffdd70] pb-px">2025/05/02(금) 12:14:45</time>
              <span className="absolute inset-y-0 left-[71.4%] flex items-center pb-[2px]">2:30</span>
            </div>
            <div className="flex w-[47px] shrink-0 items-center border-l border-[#999] pb-[2px] pl-[7px]">15:19:5</div>
          </div>
          <BottomBar />
        </section>
      </main>
    </div>
  )
}
